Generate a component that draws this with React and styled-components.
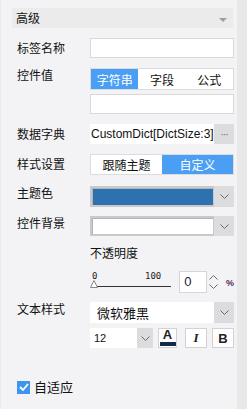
import React from "react";
import styled, { createGlobalStyle } from "styled-components";

const GlobalStyle = createGlobalStyle`
  html, body {
    margin: 0;
    padding: 0;
    background: #f3f3f5;
  }
  body {
    font-family: "Noto Sans CJK SC", "Liberation Sans", sans-serif;
    color: #111;
  }
`;

const Page = styled.div`
  display: flex;
  width: 247px;
  height: 409px;
  overflow: hidden;
`;

const Panel = styled.div`
  width: 237px;
  box-sizing: border-box;
  padding: 8px 4px 0 11px;
  background: #f3f3f5;
  border-left: 1px solid #e9e9eb;
  display: flex;
  flex-direction: column;
`;

const Scrollbar = styled.div`
  width: 10px;
  background: #e8e8e8;
`;

const Header = styled.div`
  height: 20px;
  background: #ebebeb;
  display: flex;
  align-items: center;
  justify-content: space-between;
  padding: 0 6px 0 4px;
  font-size: 12px;
  line-height: 20px;
`;

const Caret = styled.span`
  width: 0;
  height: 0;
  border-left: 4px solid transparent;
  border-right: 4px solid transparent;
  border-top: 4px solid #a0a0a0;
  margin-top: 3px;
`;

const Row = styled.div`
  display: grid;
  grid-template-columns: 78px 144px;
  margin-top: ${p => p.$mt || 0}px;
`;

const Label = styled.div`
  padding-left: 5px;
  font-size: 12px;
  line-height: ${p => (p.$top ? 14 : 20)}px;
  white-space: nowrap;
`;

const Stack = styled.div`
  display: flex;
  flex-direction: column;
  gap: ${p => p.$gap || 0}px;
`;

const Input = styled.div`
  height: 20px;
  box-sizing: border-box;
  background: #fff;
  border: 1px solid #d9d9db;
`;

const Segmented = styled.div`
  height: ${p => p.$h}px;
  box-sizing: border-box;
  display: grid;
  grid-template-columns: repeat(${p => p.$n}, 1fr);
  border: 1px solid #dcdcde;
  background: #fff;
`;

const Segment = styled.div`
  display: flex;
  align-items: center;
  justify-content: center;
  font-size: 12px;
  background: ${p => (p.$active ? "#4a9ff5" : "#fff")};
  color: ${p => (p.$active ? "#fff" : "#111")};
`;

const DictBox = styled.div`
  height: 20px;
  display: flex;
  background: #fff;
`;

const DictText = styled.div`
  flex: 1;
  display: flex;
  align-items: center;
  white-space: nowrap;
  padding-left: 1px;
  font-family: "Liberation Sans", sans-serif;
  font-size: 12px;
`;

const DotsButton = styled.div`
  width: 20px;
  background: #dcdcde;
  color: #666;
  display: flex;
  align-items: center;
  justify-content: center;
  font-size: 10px;
  letter-spacing: -1px;
  font-family: "Liberation Sans", sans-serif;
`;

const ColorPick = styled.div`
  height: ${p => p.$h}px;
  display: flex;
`;

const Swatch = styled.div`
  flex: 1;
  box-sizing: border-box;
  background: ${p => p.$color};
  border: 2px solid #c9c9cb;
  border-right-width: 1px;
  box-shadow: inset 1px 1px 0 #b4b4b6;
`;

const DropButton = styled.div`
  width: 20px;
  background: #dcdcde;
  display: flex;
  align-items: center;
  justify-content: center;
`;

const Caption = styled.div`
  font-size: 12px;
  line-height: 16px;
`;

const SliderRow = styled.div`
  height: 22px;
  margin-top: 10px;
  display: flex;
  align-items: stretch;
`;

const Slider = styled.div`
  width: 84px;
  display: flex;
  flex-direction: column;
  position: relative;
`;

const Ticks = styled.div`
  display: flex;
  justify-content: space-between;
  padding: 1px 12px 0 2px;
  font-family: "DejaVu Sans Mono", monospace;
  font-size: 9px;
  line-height: 9px;
  color: #222;
`;

const Track = styled.div`
  margin: 5px 2px 0 3px;
  height: 1px;
  background: #333;
`;

const Thumb = styled.svg`
  position: absolute;
  left: 0;
  top: 9px;
`;

const Spinner = styled.div`
  margin-left: 6px;
  width: 28px;
  box-sizing: border-box;
  background: #fff;
  border: 1px solid #d6d6d8;
  font-family: "Liberation Sans", sans-serif;
  font-size: 13px;
  line-height: 20px;
  padding-left: 4px;
  color: #1b1b3a;
`;

const Arrows = styled.div`
  width: 13px;
  display: flex;
  flex-direction: column;
  align-items: center;
  justify-content: center;
  gap: 4px;
`;

const Percent = styled.div`
  margin-left: 6px;
  align-self: center;
  padding-top: 2px;
  font-family: "Liberation Sans", sans-serif;
  font-size: 9px;
  font-weight: bold;
  color: #5a2a55;
`;

const FontSelect = styled.div`
  height: 21px;
  display: flex;
  background: #fff;
`;

const FontName = styled.div`
  flex: 1;
  padding-left: 7px;
  font-size: 13px;
  line-height: 21px;
`;

const ToolRow = styled.div`
  height: 20px;
  display: flex;
`;

const SizeSelect = styled.div`
  width: 63px;
  display: flex;
  background: #fff;
`;

const SizeValue = styled.div`
  flex: 1;
  padding-left: 4px;
  font-family: "Liberation Sans", sans-serif;
  font-size: 11px;
  line-height: 20px;
`;

const SizeDrop = styled.div`
  width: 16px;
  background: #dcdcde;
  display: flex;
  align-items: center;
  justify-content: center;
`;

const StyleButton = styled.div`
  width: ${p => p.$w}px;
  margin-left: ${p => p.$ml}px;
  box-sizing: border-box;
  background: #fff;
  border: 1px solid #d2d2d4;
  display: flex;
  flex-direction: column;
  align-items: center;
  justify-content: center;
  font-family: ${p => (p.$serif ? '"Liberation Serif", serif' : '"Liberation Sans", sans-serif')};
  font-style: ${p => (p.$italic ? "italic" : "normal")};
  font-weight: bold;
  font-size: 13px;
  color: #222;
`;

const ColorLetter = styled.span`
  font-size: 13px;
  line-height: 12px;
  margin-top: -1px;
`;

const ColorBar = styled.span`
  width: 16px;
  height: 4px;
  margin-top: 1px;
  background: #14284b;
`;

const CheckRow = styled.label`
  display: flex;
  align-items: center;
  gap: 4px;
  padding-left: 5px;
  margin-top: ${p => p.$mt}px;
  font-size: 13px;
  line-height: 14px;
`;

const CheckBox = styled.span`
  width: 13px;
  height: 13px;
  background: #3d95ee;
  display: flex;
  align-items: center;
  justify-content: center;
`;

const Chevron = ({ up }) => (
  <svg width="9" height="5" viewBox="0 0 9 5">
    <path
      d={up ? "M0.5 4.5 L4.5 0.5 L8.5 4.5" : "M0.5 0.5 L4.5 4.5 L8.5 0.5"}
      fill="none"
      stroke="#6a6a6a"
      strokeWidth="1"
    />
  </svg>
);

export default function App() {
  return (
    <Page>
      <GlobalStyle />
      <Panel>
        <Header>
          <span>高级</span>
          <Caret />
        </Header>

        <Row $mt={10}>
          <Label>标签名称</Label>
          <Input />
        </Row>

        <Row $mt={10}>
          <Label $top>控件值</Label>
          <Stack $gap={4}>
            <Segmented $n={3} $h={22}>
              <Segment $active>字符串</Segment>
              <Segment>字段</Segment>
              <Segment>公式</Segment>
            </Segmented>
            <Input />
          </Stack>
        </Row>

        <Row $mt={10}>
          <Label>数据字典</Label>
          <DictBox>
            <DictText>CustomDict[DictSize:3]</DictText>
            <DotsButton>···</DotsButton>
          </DictBox>
        </Row>

        <Row $mt={10}>
          <Label>样式设置</Label>
          <Segmented $n={2} $h={21}>
            <Segment>跟随主题</Segment>
            <Segment $active>自定义</Segment>
          </Segmented>
        </Row>

        <Row $mt={11}>
          <Label $top>主题色</Label>
          <ColorPick $h={21}>
            <Swatch $color="#2e71b1" />
            <DropButton>
              <Chevron />
            </DropButton>
          </ColorPick>
        </Row>

        <Row $mt={9}>
          <Label $top>控件背景</Label>
          <ColorPick $h={20}>
            <Swatch $color="#fff" />
            <DropButton>
              <Chevron />
            </DropButton>
          </ColorPick>
        </Row>

        <Row $mt={9}>
          <span />
          <Stack>
            <Caption>不透明度</Caption>
            <SliderRow>
              <Slider>
                <Ticks>
                  <span>0</span>
                  <span>100</span>
                </Ticks>
                <Track />
                <Thumb width="8" height="8" viewBox="0 0 8 8">
                  <path d="M4 0.5 L7.5 7.5 L0.5 7.5 Z" fill="#fff" stroke="#8a8a8a" strokeWidth="1" />
                </Thumb>
              </Slider>
              <Spinner>0</Spinner>
              <Arrows>
                <Chevron up />
                <Chevron />
              </Arrows>
              <Percent>%</Percent>
            </SliderRow>
          </Stack>
        </Row>

        <Row $mt={9}>
          <Label $top>文本样式</Label>
          <Stack $gap={5}>
            <FontSelect>
              <FontName>微软雅黑</FontName>
              <DropButton>
                <Chevron />
              </DropButton>
            </FontSelect>
            <ToolRow>
              <SizeSelect>
                <SizeValue>12</SizeValue>
                <SizeDrop>
                  <Chevron />
                </SizeDrop>
              </SizeSelect>
              <StyleButton $w={19} $ml={5}>
                <ColorLetter>A</ColorLetter>
                <ColorBar />
              </StyleButton>
              <StyleButton $w={22} $ml={8} $serif $italic>
                I
              </StyleButton>
              <StyleButton $w={22} $ml={5}>
                B
              </StyleButton>
            </ToolRow>
          </Stack>
        </Row>

        <CheckRow $mt={32}>
          <CheckBox>
            <svg width="10" height="8" viewBox="0 0 10 8">
              <path d="M1 4 L4 7 L9 1" fill="none" stroke="#fff" strokeWidth="1.8" />
            </svg>
          </CheckBox>
          自适应
        </CheckRow>
      </Panel>
      <Scrollbar />
    </Page>
  );
}
